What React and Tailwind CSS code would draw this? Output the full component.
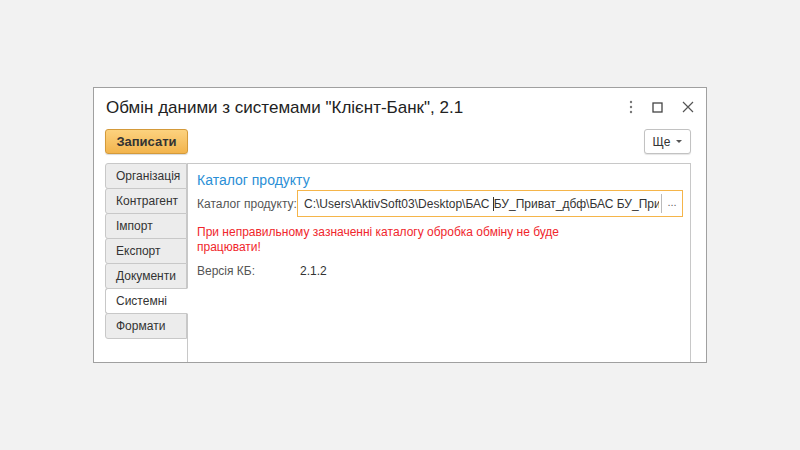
const tabs = ['Організація', 'Контрагент', 'Імпорт', 'Експорт', 'Документи', 'Системні', 'Формати'];

function Tab({ label, active }) {
  return (
    <div
      className={`h-[26px] flex items-center pl-[10px] border border-[#c8c8c8] -mt-px first:mt-0 rounded-l-[3px] text-[12px] text-[#333] ${
        active ? 'bg-white border-r-white mr-[-1px] relative z-10' : 'bg-[#ececec]'
      }`}
    >
      {label}
    </div>
  );
}

export default function App() {
  return (
    <div className="w-[800px] h-[450px] bg-[#f2f2f2] overflow-hidden" style={{ fontFamily: '"Liberation Sans", Arial, sans-serif' }}>
      <div className="pt-[87px] pl-[93px]">
        <div className="w-[614px] h-[276px] bg-white border border-[#a0a0a0] overflow-hidden flex flex-col">
          {/* Title bar */}
          <div className="h-[38px] flex items-center pl-[12px] pr-[12px] shrink-0">
            <div className="text-[17px] text-[#222] flex-1 mt-[1px]">Обмін даними з системами "Клієнт-Банк", 2.1</div>
            <div className="flex items-center gap-[19px] text-[#555]">
              <svg width="4" height="14" viewBox="0 0 4 14"><circle cx="2" cy="2" r="1.2" fill="#777" /><circle cx="2" cy="7" r="1.2" fill="#777" /><circle cx="2" cy="12" r="1.2" fill="#777" /></svg>
              <svg width="11" height="11" viewBox="0 0 11 11"><rect x="1" y="1" width="9" height="9" fill="none" stroke="#444" strokeWidth="1.3" /></svg>
              <svg width="12" height="12" viewBox="0 0 12 12"><path d="M1 1 L11 11 M11 1 L1 11" stroke="#555" strokeWidth="1.2" /></svg>
            </div>
          </div>

          {/* Command bar */}
          <div className="flex items-center justify-between pl-[11px] pr-[15px] h-[27px] mt-[2px] shrink-0">
            <button className="h-[25px] w-[83px] rounded-[3px] border border-[#d49a3a] bg-gradient-to-b from-[#fcd27e] to-[#f2b44c] text-[13px] font-bold text-[#333] shadow-[0_1px_1px_rgba(0,0,0,0.15)]">
              Записати
            </button>
            <button className="h-[25px] w-[47px] rounded-[3px] border border-[#c2c2c2] bg-white text-[12px] text-[#333] flex items-center justify-center gap-[6px] shadow-[0_1px_1px_rgba(0,0,0,0.1)]">
              Ще
              <svg width="6" height="4" viewBox="0 0 6 4"><path d="M0 0 L6 0 L3 3 Z" fill="#555" /></svg>
            </button>
          </div>

          {/* Tabs + content */}
          <div className="flex flex-1 pl-[11px] pr-[15px] mt-[8px] min-h-0">
            <div className="w-[82px] flex flex-col shrink-0">
              {tabs.map((t) => (
                <Tab key={t} label={t} active={t === 'Системні'} />
              ))}
            </div>
            <div className="flex-1 min-w-0 border border-[#c8c8c8] border-b-0 pl-[9px] pr-[7px] pt-[7px]">
              <div className="text-[14px] text-[#2a8fd6] leading-[18px]">Каталог продукту</div>
              <div className="flex items-center mt-[1px]">
                <div className="text-[12px] text-[#555] w-[100px] shrink-0 whitespace-nowrap">Каталог продукту:</div>
                <div className="flex-1 min-w-0 h-[27px] border border-[#f5b54a] flex items-center pl-[6px] overflow-hidden">
                  <div className="flex-1 min-w-0 text-[12px] text-[#333] whitespace-nowrap overflow-hidden">
                    C:\Users\AktivSoft03\Desktop\БАС <span className="border-l border-[#333]"></span>БУ_Приват_дбф\БАС БУ_При
                  </div>
                  <div className="w-px h-[19px] bg-[#bbb] ml-[2px] shrink-0"></div>
                  <div className="w-[20px] shrink-0 text-center text-[11px] text-[#666] pb-[3px]">...</div>
                </div>
              </div>
              <div className="text-[12px] text-[#f0262c] leading-[15px] mt-[8px] w-[370px]">
                При неправильному зазначенні каталогу обробка обміну не буде працювати!
              </div>
              <div className="flex items-center mt-[7px] text-[12px] text-[#555]">
                <div className="w-[103px]">Версія КБ:</div>
                <div className="text-[#333]">2.1.2</div>
              </div>
            </div>
          </div>
        </div>
      </div>
    </div>
  );
}
